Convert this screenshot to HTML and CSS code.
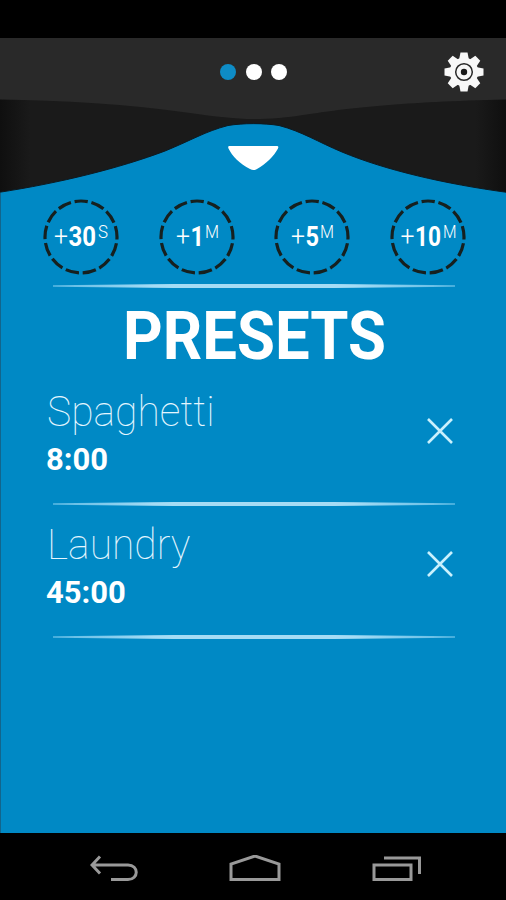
FILE: index.html
```html
<!DOCTYPE html>
<html lang="en">
<head>
  <meta charset="UTF-8">
  <title>Timer presets</title>
  <link rel="stylesheet" href="styles.css">
</head>
<body>
  <div class="status-bar"></div>

  <header class="header">
    <svg class="header-bg" viewBox="0 0 506 155" width="506" height="155">
      <defs>
        <linearGradient id="side">
          <stop offset="0" stop-color="#0f0f0f"/>
          <stop offset="0.06" stop-color="#1a1a1a"/>
          <stop offset="0.94" stop-color="#1a1a1a"/>
          <stop offset="1" stop-color="#0f0f0f"/>
        </linearGradient>
      </defs>
      <rect width="506" height="155" fill="url(#side)"/>
      <path fill="#292929" d="M0 0H506V61.500C400 64 350 70 310 76C285 80 270 81 253 81C236 81 215 78.500 190 75C130 66 60 62.500 0 61.500Z"/>
      <path fill="#0089c5" stroke="#0c1a22" stroke-width="1" d="M-2 154.500C60 145 120 130 165 113C192 102 205 93.500 228 87.500C243 85 264 85 279 87.500C302 93.500 318 104 342 114C385 132 445 146 508 154.500V158H-2Z"/>
      <path fill="#fff" d="M229.500 108H277Q279 108 278 110.500C274 118 266 126 257 131Q253.500 133 250 131C240 126 232 118 228.500 110.500Q227.500 108 229.500 108Z"/>
    </svg>
    <div class="dots">
      <span class="dot active"></span>
      <span class="dot"></span>
      <span class="dot"></span>
    </div>
    <svg class="gear" viewBox="-20 -20 40 40" width="40" height="40">
      <g fill="#f8f8f8">
        <circle r="14.300"/>
        <g id="teeth">
          <path id="tooth" d="M-4.800-13L-3.500-19.500H3.500L4.800-13V13L3.500 19.500H-3.500L-4.800 13Z"/>
          <use href="#tooth" transform="rotate(45)"/>
        </g>
        <use href="#teeth" transform="rotate(90)"/>
      </g>
      <circle r="8.300" fill="none" stroke="#292929" stroke-width="1.500"/>
      <circle r="3.200" fill="#1a1a1a"/>
    </svg>
  </header>

  <main class="main">
    <div class="add-buttons">
      <svg class="add" viewBox="0 0 76 76" width="76" height="76">
        <circle class="ring" cx="38" cy="38" r="36"/>
        <text class="plus" x="11" y="47" textLength="14" lengthAdjust="spacingAndGlyphs">+</text>
        <text class="num" x="25.500" y="47" textLength="27.500" lengthAdjust="spacingAndGlyphs">30</text>
        <text class="unit" x="55" y="39" textLength="10" lengthAdjust="spacingAndGlyphs">S</text>
      </svg>
      <svg class="add" viewBox="0 0 76 76" width="76" height="76">
        <circle class="ring" cx="38" cy="38" r="36"/>
        <text class="plus" x="17" y="47" textLength="14" lengthAdjust="spacingAndGlyphs">+</text>
        <text class="num" x="31.500" y="47" textLength="13.500" lengthAdjust="spacingAndGlyphs">1</text>
        <text class="unit" x="46" y="39" textLength="14" lengthAdjust="spacingAndGlyphs">M</text>
      </svg>
      <svg class="add" viewBox="0 0 76 76" width="76" height="76">
        <circle class="ring" cx="38" cy="38" r="36"/>
        <text class="plus" x="17" y="47" textLength="14" lengthAdjust="spacingAndGlyphs">+</text>
        <text class="num" x="31.500" y="47" textLength="13.500" lengthAdjust="spacingAndGlyphs">5</text>
        <text class="unit" x="46" y="39" textLength="14" lengthAdjust="spacingAndGlyphs">M</text>
      </svg>
      <svg class="add" viewBox="0 0 76 76" width="76" height="76">
        <circle class="ring" cx="38" cy="38" r="36"/>
        <text class="plus" x="10.500" y="47" textLength="14" lengthAdjust="spacingAndGlyphs">+</text>
        <text class="num" x="25" y="47" textLength="26" lengthAdjust="spacingAndGlyphs">10</text>
        <text class="unit" x="53" y="39" textLength="13.500" lengthAdjust="spacingAndGlyphs">M</text>
      </svg>
    </div>
    <div class="line"></div>

    <h1 class="title">PRESETS</h1>

    <div class="preset">
      <div>
        <div class="name">Spaghetti</div>
        <div class="time">8:00</div>
      </div>
      <svg class="close" viewBox="0 0 26 26" width="26" height="26">
        <path d="M1 1L25 25M25 1L1 25"/>
      </svg>
    </div>
    <div class="line"></div>

    <div class="preset">
      <div>
        <div class="name">Laundry</div>
        <div class="time">45:00</div>
      </div>
      <svg class="close" viewBox="0 0 26 26" width="26" height="26">
        <path d="M1 1L25 25M25 1L1 25"/>
      </svg>
    </div>
    <div class="line"></div>
  </main>

  <nav class="nav-bar">
    <svg viewBox="0 0 48 28" width="48" height="28">
      <path d="M10 1.500L2 10L10 18.500M2 10H38C49 10 49 24.500 38 24.500H21"/>
    </svg>
    <svg viewBox="0 0 52 28" width="52" height="28">
      <path d="M2 24.500V9L26 1L50 9V24.500Z"/>
    </svg>
    <svg viewBox="0 0 50 28" width="50" height="28">
      <path d="M2 10H39V24.500H2ZM12 3H47.500V19"/>
    </svg>
  </nav>
</body>
</html>
```
FILE: styles.css
```css
* {
  box-sizing: border-box;
}
body {
  margin: 0;
  width: 506px;
  height: 900px;
  display: flex;
  flex-direction: column;
  overflow: hidden;
  background: #000;
  color: #fff;
  font-family: Roboto, "Liberation Sans", sans-serif;
}
.status-bar {
  height: 38px;
}
.header {
  position: relative;
  height: 155px;
  display: grid;
  grid-template-columns: 1fr auto 1fr;
  align-items: start;
}
.header-bg {
  position: absolute;
  top: 0;
  left: 0;
}
.dots {
  position: relative;
  grid-column: 2;
  display: flex;
  gap: 9.5px;
  padding: 26px 0 0 1px;
}
.dot {
  width: 16px;
  height: 16px;
  border-radius: 50%;
  background: #fff;
}
.dot.active {
  background: #0e8cc6;
}
.gear {
  position: relative;
  justify-self: end;
  margin: 14px 22px 0 0;
}
.main {
  height: 640px;
  padding: 6px 0 0;
  background: #0089c5;
  border-left: 1px solid #12658c;
}
.add-buttons {
  display: flex;
  justify-content: space-between;
  padding: 0 40.5px 0 42px;
}
.ring {
  fill: none;
  stroke: #16201f;
  stroke-width: 3.2;
  stroke-dasharray: 13.600 3.800;
  stroke-dashoffset: 6.800;
  transform: rotate(-90deg);
  transform-origin: 38px 38px;
}
.add text {
  fill: #fff;
}
.plus {
  font-size: 27px;
  font-weight: 300;
}
.num {
  font-size: 27px;
  font-weight: 700;
}
.unit {
  font-size: 18px;
  font-weight: 300;
}
.line {
  width: 402px;
  height: 4px;
  margin-left: 52px;
  background: linear-gradient(90deg, #5bb9e3, #a5dcf5 25%, #a5dcf5 75%, #5bb9e3);
  clip-path: polygon(0 30%, 30% 0, 70% 0, 100% 30%, 100% 70%, 70% 100%, 30% 100%, 0 70%);
}
.add-buttons + .line {
  margin-top: 9px;
}
.title {
  margin: 10px 0 0 2px;
  height: 77px;
  font-size: 66px;
  line-height: 77px;
  font-weight: 700;
  text-align: center;
  transform: scaleX(0.935);
}
.preset {
  height: 129px;
  display: flex;
  justify-content: space-between;
  align-items: flex-start;
  padding: 13px 53px 0 46px;
}
.title + .preset {
  height: 127px;
  padding-top: 11px;
}
.name {
  font-size: 43px;
  line-height: 50px;
  font-weight: 100;
  color: #e4f6ff;
  transform: scaleX(0.95);
  transform-origin: 0 0;
}
.time {
  margin: 4px 0 0 -1px;
  font-size: 31px;
  line-height: 40px;
  font-weight: 700;
}
.close {
  margin-top: 32px;
}
.close path {
  fill: none;
  stroke: #c9f1fd;
  stroke-width: 2.600;
}
.nav-bar {
  height: 67px;
  display: flex;
  justify-content: space-between;
  padding: 22px 84.5px 0 90px;
}
.nav-bar path {
  fill: none;
  stroke: #999;
  stroke-width: 3;
}
```
